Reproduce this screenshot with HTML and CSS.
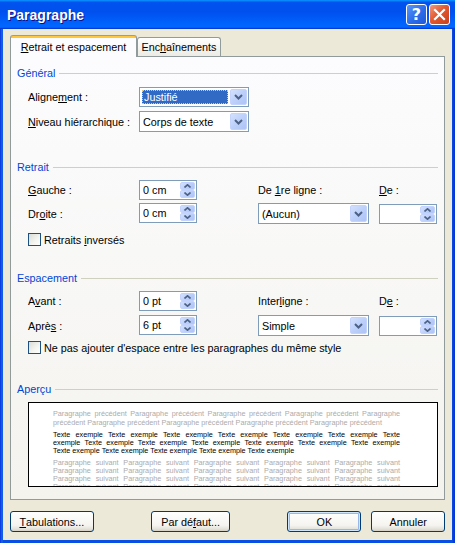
FILE: index.html
```html
<!DOCTYPE html>
<html lang="fr">
<head>
<meta charset="utf-8">
<title>Paragraphe</title>
<link rel="stylesheet" href="styles.css">
</head>
<body>
<div class="window">
  <div class="titlebar">
    <span class="title">Paragraphe</span>
    <span class="tb-btn help">?</span>
    <span class="tb-btn close"><svg width="13" height="13" viewBox="0 0 13 13"><path d="M2 2 L11 11 M11 2 L2 11" stroke="#fff" stroke-width="2.2" stroke-linecap="square"/></svg></span>
  </div>
  <div class="client">
    <div class="tabs">
      <div class="tab active t1"><u>R</u>etrait et espacement</div>
      <div class="tab t2">Enc<u>h</u>aînements</div>
    </div>
    <div class="panel">
      <div class="group-title g1"><span>Général</span><span class="line"></span></div>
      <div class="row r1">
        <span class="lbl">Aligne<u>m</u>ent :</span>
        <div class="select w110"><span class="val focus">Justifié</span><span class="dd"><svg width="9" height="6" viewBox="0 0 9 6"><path d="M1 1 L4.5 4.5 L8 1" fill="none" stroke="#4D6185" stroke-width="2"/></svg></span></div>
      </div>
      <div class="row r2">
        <span class="lbl"><u>N</u>iveau hiérarchique :</span>
        <div class="select w110 h21"><span class="val">Corps de texte</span><span class="dd"><svg width="9" height="6" viewBox="0 0 9 6"><path d="M1 1 L4.5 4.5 L8 1" fill="none" stroke="#4D6185" stroke-width="2"/></svg></span></div>
      </div>

      <div class="group-title g2"><span>Retrait</span><span class="line"></span></div>
      <div class="grid gr1">
        <span class="lbl"><u>G</u>auche :</span>
        <div class="spin"><span class="val">0 cm</span><span class="btns"><span class="sb"><svg width="7" height="4" viewBox="0 0 7 4"><path d="M0.5 3.5 L3.5 0.8 L6.5 3.5" fill="none" stroke="#4D6185" stroke-width="1.6"/></svg></span><span class="sb"><svg width="7" height="4" viewBox="0 0 7 4"><path d="M0.5 0.5 L3.5 3.2 L6.5 0.5" fill="none" stroke="#4D6185" stroke-width="1.6"/></svg></span></span></div>
        <span class="lbl">De <u>1</u>re ligne :</span>
        <span class="lbl"><u>D</u>e :</span>
        <span class="lbl">Dr<u>o</u>ite :</span>
        <div class="spin top"><span class="val">0 cm</span><span class="btns"><span class="sb"><svg width="7" height="4" viewBox="0 0 7 4"><path d="M0.5 3.5 L3.5 0.8 L6.5 3.5" fill="none" stroke="#4D6185" stroke-width="1.6"/></svg></span><span class="sb"><svg width="7" height="4" viewBox="0 0 7 4"><path d="M0.5 0.5 L3.5 3.2 L6.5 0.5" fill="none" stroke="#4D6185" stroke-width="1.6"/></svg></span></span></div>
        <div class="select w111 h21"><span class="val">(Aucun)</span><span class="dd"><svg width="9" height="6" viewBox="0 0 9 6"><path d="M1 1 L4.5 4.5 L8 1" fill="none" stroke="#4D6185" stroke-width="2"/></svg></span></div>
        <div class="spin h21"><span class="val"></span><span class="btns"><span class="sb"><svg width="7" height="4" viewBox="0 0 7 4"><path d="M0.5 3.5 L3.5 0.8 L6.5 3.5" fill="none" stroke="#4D6185" stroke-width="1.6"/></svg></span><span class="sb"><svg width="7" height="4" viewBox="0 0 7 4"><path d="M0.5 0.5 L3.5 3.2 L6.5 0.5" fill="none" stroke="#4D6185" stroke-width="1.6"/></svg></span></span></div>
      </div>
      <div class="check c1"><span class="box"></span><span>Retraits <u>i</u>nversés</span></div>

      <div class="group-title g3"><span>Espacement</span><span class="line"></span></div>
      <div class="grid gr2">
        <span class="lbl">A<u>v</u>ant :</span>
        <div class="spin"><span class="val">0 pt</span><span class="btns"><span class="sb"><svg width="7" height="4" viewBox="0 0 7 4"><path d="M0.5 3.5 L3.5 0.8 L6.5 3.5" fill="none" stroke="#4D6185" stroke-width="1.6"/></svg></span><span class="sb"><svg width="7" height="4" viewBox="0 0 7 4"><path d="M0.5 0.5 L3.5 3.2 L6.5 0.5" fill="none" stroke="#4D6185" stroke-width="1.6"/></svg></span></span></div>
        <span class="lbl">Inter<u>l</u>igne :</span>
        <span class="lbl">D<u>e</u> :</span>
        <span class="lbl">Aprè<u>s</u> :</span>
        <div class="spin top"><span class="val">6 pt</span><span class="btns"><span class="sb"><svg width="7" height="4" viewBox="0 0 7 4"><path d="M0.5 3.5 L3.5 0.8 L6.5 3.5" fill="none" stroke="#4D6185" stroke-width="1.6"/></svg></span><span class="sb"><svg width="7" height="4" viewBox="0 0 7 4"><path d="M0.5 0.5 L3.5 3.2 L6.5 0.5" fill="none" stroke="#4D6185" stroke-width="1.6"/></svg></span></span></div>
        <div class="select w111 h21"><span class="val">Simple</span><span class="dd"><svg width="9" height="6" viewBox="0 0 9 6"><path d="M1 1 L4.5 4.5 L8 1" fill="none" stroke="#4D6185" stroke-width="2"/></svg></span></div>
        <div class="spin h21"><span class="val"></span><span class="btns"><span class="sb"><svg width="7" height="4" viewBox="0 0 7 4"><path d="M0.5 3.5 L3.5 0.8 L6.5 3.5" fill="none" stroke="#4D6185" stroke-width="1.6"/></svg></span><span class="sb"><svg width="7" height="4" viewBox="0 0 7 4"><path d="M0.5 0.5 L3.5 3.2 L6.5 0.5" fill="none" stroke="#4D6185" stroke-width="1.6"/></svg></span></span></div>
      </div>
      <div class="check c2"><span class="box"></span><span>Ne pas a<u>j</u>outer d'espace entre les paragraphes du même style</span></div>

      <div class="group-title g4"><span>Aperçu</span><span class="line"></span></div>
      <div class="preview">
        <div class="para prev">
          <div class="ln j">Paragraphe précédent Paragraphe précédent Paragraphe précédent Paragraphe précédent Paragraphe</div>
          <div class="ln">précédent Paragraphe précédent Paragraphe précédent Paragraphe précédent Paragraphe précédent</div>
        </div>
        <div class="para sample">
          <div class="ln j">Texte exemple Texte exemple Texte exemple Texte exemple Texte exemple Texte exemple Texte</div>
          <div class="ln j">exemple Texte exemple Texte exemple Texte exemple Texte exemple Texte exemple Texte exemple</div>
          <div class="ln">Texte exemple Texte exemple Texte exemple Texte exemple Texte exemple</div>
        </div>
        <div class="para next">
          <div class="ln j">Paragraphe suivant Paragraphe suivant Paragraphe suivant Paragraphe suivant Paragraphe suivant</div>
          <div class="ln j">Paragraphe suivant Paragraphe suivant Paragraphe suivant Paragraphe suivant Paragraphe suivant</div>
          <div class="ln j">Paragraphe suivant Paragraphe suivant Paragraphe suivant Paragraphe suivant Paragraphe suivant</div>
          <div class="ln j">Paragraphe suivant Paragraphe suivant Paragraphe suivant Paragraphe suivant Paragraphe suivant</div>
        </div>
      </div>
    </div>
    <div class="buttons">
      <span class="btn b-tab"><u>T</u>abulations...</span>
      <span class="btn b-def">Par dé<u>f</u>aut...</span>
      <span class="btn b-ok">OK</span>
      <span class="btn b-cancel">Annuler</span>
    </div>
  </div>
</div>
</body>
</html>
```

FILE: styles.css
```css
* { box-sizing: border-box; }
html, body { margin: 0; padding: 0; }
body {
  font-family: "Liberation Sans", Arial, sans-serif;
  font-size: 10.8px;
  color: #000;
  background: #0842D6;
}
u { text-underline-offset: 1px; }

.window {
  width: 455px;
  height: 543px;
  display: flex;
  flex-direction: column;
  background: linear-gradient(90deg, #0831D9 0, #166AEE 2px, #0A4FE4 3px, #0A4FE4 452px, #0842D6 453px, #0831D9 455px);
  overflow: hidden;
}

.titlebar {
  height: 29px;
  flex: none;
  display: flex;
  align-items: flex-start;
  padding: 4px 5px 0 7px;
  background: linear-gradient(180deg, #0997ff, #0053ee 8%, #0050ee 40%, #0066ff 88%, #0066ff 93%, #005bff 95%, #003dd7 96%, #003dd7);
}
.title {
  flex: 1;
  color: #fff;
  font-weight: bold;
  font-size: 14px;
  line-height: 22px;
  text-shadow: 1px 1px 0 #0F1089;
}
.tb-btn {
  width: 21px;
  height: 21px;
  margin-left: 2px;
  border: 1px solid #fff;
  border-radius: 3px;
  display: flex;
  align-items: center;
  justify-content: center;
}
.help {
  background: linear-gradient(135deg, #5A96F8 0%, #2B6CEA 55%, #1F58D8 100%);
  color: #fff;
  font-weight: bold;
  font-size: 16px;
  font-family: "DejaVu Sans", sans-serif;
}
.close {
  background: linear-gradient(135deg, #EE9A80 0%, #E2592F 45%, #C8401A 100%);
}

.client {
  flex: 1;
  margin: 0 3px 3px 3px;
  background: #ECE9D8;
  padding: 6px 7px 0 7px;
  display: flex;
  flex-direction: column;
}

.tabs {
  display: flex;
  align-items: flex-end;
  height: 21px;
  position: relative;
  z-index: 1;
}
.tab {
  height: 19px;
  border: 1px solid #919B9C;
  border-bottom: none;
  border-radius: 3px 3px 0 0;
  background: linear-gradient(#FFFFFF, #F3F3EF 60%, #ECEBE5);
  display: flex;
  align-items: center;
  justify-content: center;
  padding-bottom: 1px;
}
.t1 { width: 127px; }
.t2 { width: 84px; }
.tab.active {
  height: 22px;
  margin-bottom: -1px;
  border-top: 1px solid #E68B2C;
  background: linear-gradient(#FFC73C 0, #FFC73C 2px, #FCFCFE 2px);
  padding-top: 1px;
  padding-bottom: 0;
}

.panel {
  height: 444px;
  flex: none;
  border: 1px solid #919B9C;
  background: linear-gradient(#FCFCFE, #F4F3EE);
  padding: 0 6px;
}

.group-title {
  display: flex;
  align-items: center;
  height: 14px;
  color: #0046D5;
}
.group-title .line {
  flex: 1;
  height: 1px;
  background: #D0D0BF;
  margin-left: 4px;
}
.g1 { margin-top: 9px; }
.g2 { margin-top: 28px; }
.g3 { margin-top: 25px; }
.g4 { margin-top: 28px; }

.row {
  display: flex;
  align-items: center;
  padding-left: 11px;
}
.r1 { margin-top: 7px; height: 20px; }
.r2 { margin-top: 4px; height: 21px; }
.lbl { width: 111px; white-space: nowrap; }

.select {
  height: 20px;
  border: 1px solid #7F9DB9;
  background: #fff;
  display: flex;
  padding: 1px;
}
.h21 { height: 21px; }
.w110 { width: 110px; }
.w111 { width: 111px; }
.select .val {
  flex: 1;
  display: flex;
  align-items: center;
  padding-left: 2px;
  white-space: nowrap;
}
.select .val.focus {
  margin: 1px 2px 1px 1px;
  padding-left: 1px;
  background: #316AC5;
  color: #fff;
  border: 1px dotted #E8C878;
}
.dd {
  width: 17px;
  border: 1px solid #C3D3FD;
  border-radius: 2px;
  background: linear-gradient(135deg, #D4E1FD 0%, #BCD0FA 50%, #AFC4F6 100%);
  display: flex;
  align-items: center;
  justify-content: center;
}

.grid {
  display: grid;
  grid-template-columns: 111px 119px 121px 58px;
  padding-left: 11px;
  align-items: center;
}
.gr1 { margin-top: 6px; grid-template-rows: 20px 21px; row-gap: 3px; }
.gr2 { margin-top: 6px; grid-template-rows: 20px 21px; row-gap: 4px; }
.spin {
  width: 58px;
  height: 20px;
  border: 1px solid #7F9DB9;
  background: #fff;
  display: flex;
  padding: 1px;
}
.spin.top { align-self: start; }
.spin .val {
  flex: 1;
  display: flex;
  align-items: center;
  padding-left: 2px;
}
.btns {
  width: 15px;
  display: flex;
  flex-direction: column;
}
.sb {
  flex: 1;
  border: 1px solid #C3D3FD;
  border-radius: 2px;
  background: linear-gradient(135deg, #D4E1FD 0%, #BCD0FA 50%, #AFC4F6 100%);
  display: flex;
  align-items: center;
  justify-content: center;
}

.check {
  display: flex;
  align-items: center;
  height: 13px;
  padding-left: 11px;
}
.c1 { margin-top: 9px; }
.c2 { margin-top: 5px; }
.box {
  width: 13px;
  height: 13px;
  border: 1px solid #1C5180;
  background: linear-gradient(135deg, #DCDCD7 0%, #F4F4F0 60%, #FFFFFF 100%);
  margin-right: 3px;
  flex: none;
}

.preview {
  margin: 6px 0 0 11px;
  width: 410px;
  height: 85px;
  border: 1px solid #000;
  background: #fff;
  padding: 6px 37px 0 24px;
  overflow: hidden;
  font-size: 7.25px;
  line-height: 8px;
}
.ln { white-space: nowrap; }
.ln.j { white-space: normal; text-align: justify; text-align-last: justify; }
.prev, .next { color: #ABABAB; }
.prev .ln { line-height: 9px; }
.sample { color: #000; margin-top: 4px; }
.next { margin-top: 4px; }

.buttons {
  display: flex;
  margin-top: 11px;
  height: 21px;
}
.btn {
  height: 21px;
  border: 1px solid #003C74;
  border-radius: 3px;
  background: linear-gradient(#FFFFFF 0%, #F5F4F0 70%, #E3E1D8 90%, #D6D0C5 100%);
  display: flex;
  align-items: center;
  justify-content: center;
  white-space: nowrap;
}
.b-tab { width: 84px; }
.b-def { width: 80px; margin-left: 57px; }
.b-ok { width: 74px; margin-left: 57px; box-shadow: inset 0 0 0 1px #CEE7FF, inset 0 0 0 2px #98B8EA; }
.b-cancel { width: 74px; margin-left: 10px; }
```
